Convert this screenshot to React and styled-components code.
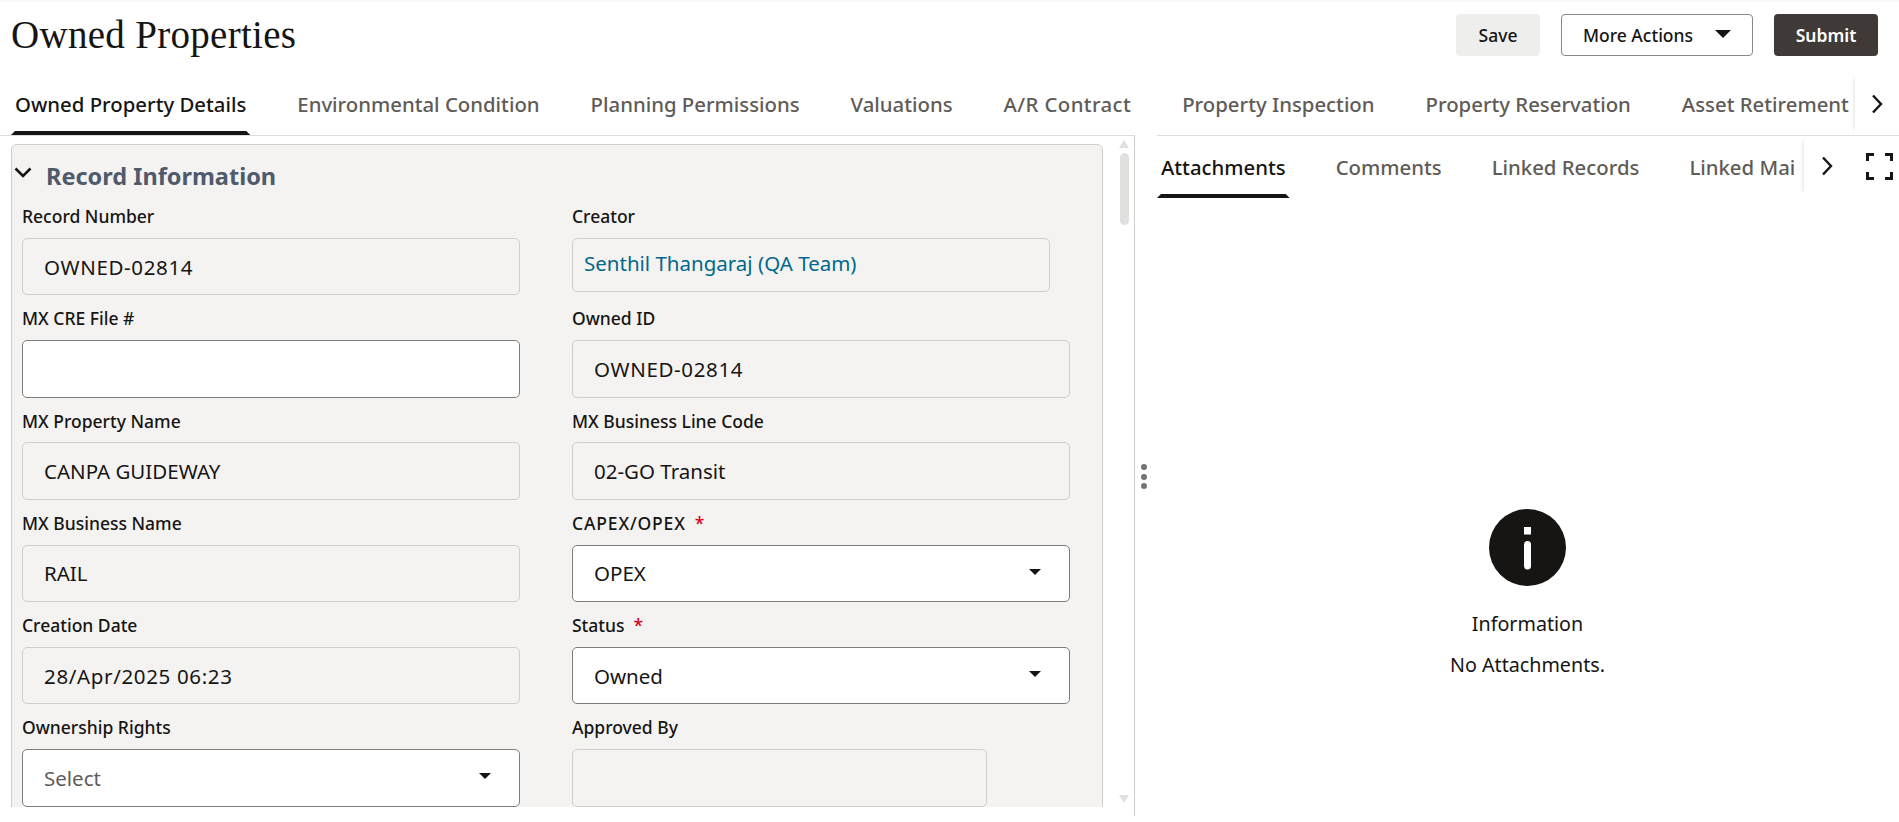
import styled, { createGlobalStyle } from "styled-components";

const GlobalStyle = createGlobalStyle`
  html, body {
    margin: 0;
    padding: 0;
    height: 100%;
    background: #fff;
    overflow: hidden;
  }
  body {
    font-family: "Noto Sans", "Open Sans", sans-serif;
    color: #161513;
  }
  * {
    box-sizing: border-box;
  }
`;

const Page = styled.div`
  width: 1899px;
  height: 822px;
  overflow: hidden;
  background: #fff;
`;

const TopBar = styled.header`
  height: 75px;
  border-top: 2px solid #f8f8f8;
  padding: 12px 21px 0 11px;
  display: flex;
  align-items: flex-start;
  justify-content: space-between;
`;

const Title = styled.h1`
  margin: 0;
  font-family: "Liberation Serif", serif;
  font-size: 39px;
  line-height: 42px;
  letter-spacing: 0.3px;
  font-weight: 400;
  color: #161513;
`;

const Actions = styled.div`
  display: flex;
  gap: 21px;
`;

const Button = styled.button`
  height: 42px;
  width: ${(p) => p.$width}px;
  border-radius: 4px;
  border: 1px solid ${(p) => (p.$variant === "outline" ? "#8a8886" : "transparent")};
  background: ${(p) =>
    p.$variant === "primary" ? "#3f3a37" : p.$variant === "outline" ? "#fff" : "#eeeeed"};
  color: ${(p) => (p.$variant === "primary" ? "#fff" : "#161513")};
  font-family: inherit;
  font-size: 17.5px;
  font-weight: ${(p) => (p.$variant === "primary" ? 600 : 500)};
  padding: 0;
  display: flex;
  align-items: center;
  justify-content: center;
  gap: 22px;
`;

const Caret = styled.span`
  display: block;
  flex: none;
  width: 0;
  height: 0;
  margin-bottom: 3px;
  border-left: ${(p) => p.$size}px solid transparent;
  border-right: ${(p) => p.$size}px solid transparent;
  border-top: ${(p) => p.$size}px solid #161513;
`;

const TabRow = styled.div`
  display: flex;
  height: ${(p) => p.$height}px;
`;

const TabStrip = styled.nav`
  flex: 0 0 ${(p) => p.$width}px;
  min-width: 0;
  display: flex;
  gap: ${(p) => p.$gap}px;
  overflow: hidden;
`;

const Tab = styled.div`
  position: relative;
  flex: none;
  height: 100%;
  padding: 0 4px ${(p) => p.$lift || 0}px;
  display: flex;
  align-items: center;
  font-size: 20.35px;
  font-weight: 500;
  letter-spacing: ${(p) => p.$tracking || 0}px;
  white-space: nowrap;
  color: ${(p) => (p.$active ? "#161513" : "#5f5b57")};

  &::after {
    content: "";
    display: ${(p) => (p.$active ? "block" : "none")};
    position: absolute;
    left: 0;
    right: 0;
    bottom: 0;
    height: 4px;
    background: #161513;
    clip-path: polygon(4px 0, calc(100% - 4px) 0, 100% 100%, 0 100%);
  }
`;

const ScrollTabButton = styled.div`
  flex: none;
  width: ${(p) => p.$width}px;
  height: ${(p) => p.$height}px;
  margin: ${(p) => p.$top || 0}px 0 0 ${(p) => p.$left || 0}px;
  display: flex;
  align-items: center;
  justify-content: center;
  box-shadow: -3px 0 4px -3px rgba(0, 0, 0, 0.18);
  background: #fff;
`;

const MainTabs = styled(TabRow)`
  padding-left: 11px;
`;

const Split = styled.div`
  display: flex;
  height: 681px;
`;

const LeftPane = styled.section`
  flex: 0 0 1135px;
  height: 100%;
  border-top: 1px solid #dedddb;
  border-right: 1px solid #cfcecc;
  display: flex;
  align-items: flex-start;
`;

const FormScroll = styled.div`
  flex: 0 0 1119px;
  height: 671px;
  overflow: hidden;
  padding: 8px 16px 0 11px;
`;

const Panel = styled.div`
  background: #f4f3f1;
  border: 1px solid #cfcecc;
  border-radius: 6px;
  padding: 0 32px 24px 10px;
`;

const SectionHeader = styled.div`
  height: 48px;
  margin-left: -8px;
  padding-top: 14px;
  display: flex;
  align-items: center;
  gap: 14px;
`;

const SectionTitle = styled.h2`
  margin: 0;
  font-size: 23.5px;
  line-height: 30px;
  font-weight: 700;
  color: #4f5a6b;
`;

const FormGrid = styled.div`
  display: grid;
  grid-template-columns: 498px 498px;
  column-gap: 52px;
`;

const Field = styled.div`
  min-width: 0;
  height: 102.25px;
`;

const Label = styled.div`
  height: 24px;
  margin: 11px 0 9.75px;
  font-size: 17.5px;
  line-height: 24px;
  font-weight: 500;
  color: #161513;
  white-space: nowrap;
`;

const WideCaps = styled.span`
  letter-spacing: 0.85px;
`;

const Required = styled.span`
  color: #d6001c;
  margin-left: 9px;
`;

const Input = styled.div`
  width: ${(p) => p.$width || 498}px;
  height: ${(p) => p.$height || 57.5}px;
  border-radius: 5px;
  border: 1px solid ${(p) => (p.$editable ? "#7f7d7b" : "#cfcecc")};
  background: ${(p) => (p.$editable ? "#fff" : "#f4f3f1")};
  padding: ${(p) => (p.$link ? "0 0 4px 11px" : "0 28px 0 21px")};
  display: flex;
  align-items: center;
  justify-content: space-between;
  font-size: 20.5px;
  letter-spacing: ${(p) => (p.$numeric ? 0.65 : 0)}px;
  white-space: nowrap;
  color: ${(p) => (p.$link ? "#00688c" : p.$placeholder ? "#5f5b57" : "#161513")};
`;

const ScrollTrack = styled.div`
  flex: 0 0 10px;
  height: 671px;
  padding-top: 4px;
  display: flex;
  flex-direction: column;
  align-items: center;
`;

const ArrowUp = styled.span`
  width: 0;
  height: 0;
  border-left: 5px solid transparent;
  border-right: 5px solid transparent;
  border-bottom: 8px solid #e0e0df;
`;

const ArrowDown = styled.span`
  width: 0;
  height: 0;
  margin-top: auto;
  margin-bottom: 4px;
  border-left: 5px solid transparent;
  border-right: 5px solid transparent;
  border-top: 8px solid #e0e0df;
`;

const ScrollThumb = styled.div`
  width: 9px;
  height: 72px;
  margin-top: 5px;
  border-radius: 5px;
  background: #e0e0df;
`;

const Splitter = styled.div`
  flex: 0 0 22px;
  height: 100%;
  padding: 329px 4px 0 0;
  display: flex;
  flex-direction: column;
  align-items: center;
  gap: 3.5px;
`;

const Dot = styled.span`
  width: 6px;
  height: 6px;
  border-radius: 50%;
  background: #757371;
`;

const RightPane = styled.section`
  flex: 1;
  min-width: 0;
  height: 100%;
  border-top: 1px solid #dedddb;
`;

const ExpandButton = styled.div`
  flex: 1;
  display: flex;
  align-items: flex-start;
  padding: 17px 0 0 16px;
`;

const EmptyState = styled.div`
  padding: 311px 1px 0 0;
  display: flex;
  flex-direction: column;
  align-items: center;
  font-size: 19.7px;
  line-height: 28px;
  color: #161513;
`;

const EmptyTitle = styled.div`
  margin-top: 24px;
`;

const EmptyText = styled.div`
  margin-top: 13px;
`;

const ChevronRight = () => (
  <svg width="14" height="22" viewBox="0 0 14 22" fill="none">
    <path d="M3 2.5 L11 11 L3 19.5" stroke="#161513" strokeWidth="2.4" />
  </svg>
);

const ChevronDown = () => (
  <svg width="18" height="12" viewBox="0 0 18 12" fill="none" style={{ marginTop: -6 }}>
    <path d="M1.5 1.5 L9 9 L16.5 1.5" stroke="#161513" strokeWidth="2.6" />
  </svg>
);

const FullscreenIcon = () => (
  <svg width="27" height="27" viewBox="0 0 27 27" fill="none">
    <path
      d="M1.5 8 V1.5 H8 M19 1.5 H25.5 V8 M1.5 19 V25.5 H8 M19 25.5 H25.5 V19"
      stroke="#161513"
      strokeWidth="3"
    />
  </svg>
);

const InfoIcon = () => (
  <svg width="77" height="77" viewBox="0 0 77 77">
    <circle cx="38.5" cy="38.5" r="38.5" fill="#161513" />
    <rect x="35" y="18" width="7" height="7.5" fill="#fff" />
    <rect x="35" y="32" width="7" height="28.5" rx="3.5" fill="#fff" />
  </svg>
);

const mainTabs = [
  "Owned Property Details",
  "Environmental Condition",
  "Planning Permissions",
  "Valuations",
  "A/R Contract",
  "Property Inspection",
  "Property Reservation",
  "Asset Retirement Obligation",
];

const sideTabs = ["Attachments", "Comments", "Linked Records", "Linked Mail"];

export default function App() {
  return (
    <Page>
      <GlobalStyle />
      <TopBar>
        <Title>Owned Properties</Title>
        <Actions>
          <Button $width={84}>Save</Button>
          <Button $width={192} $variant="outline">
            More Actions
            <Caret $size={8} />
          </Button>
          <Button $width={104} $variant="primary">
            Submit
          </Button>
        </Actions>
      </TopBar>

      <MainTabs $height={60}>
        <TabStrip $width={1844} $gap={43}>
          {mainTabs.map((tab, i) => (
            <Tab key={tab} $active={i === 0} $lift={2} $tracking={tab === "A/R Contract" ? 0.4 : 0}>
              {tab}
            </Tab>
          ))}
        </TabStrip>
        <ScrollTabButton $width={44} $height={58}>
          <ChevronRight />
        </ScrollTabButton>
      </MainTabs>

      <Split>
        <LeftPane>
          <FormScroll>
            <Panel>
              <SectionHeader>
                <ChevronDown />
                <SectionTitle>Record Information</SectionTitle>
              </SectionHeader>
              <FormGrid>
                <Field>
                  <Label>Record Number</Label>
                  <Input $numeric>OWNED-02814</Input>
                </Field>
                <Field>
                  <Label>Creator</Label>
                  <Input $link $width={477.5} $height={54}>
                    Senthil Thangaraj (QA Team)
                  </Input>
                </Field>
                <Field>
                  <Label>MX CRE File #</Label>
                  <Input $editable />
                </Field>
                <Field>
                  <Label>Owned ID</Label>
                  <Input $numeric>OWNED-02814</Input>
                </Field>
                <Field>
                  <Label>MX Property Name</Label>
                  <Input>CANPA GUIDEWAY</Input>
                </Field>
                <Field>
                  <Label>MX Business Line Code</Label>
                  <Input>02-GO Transit</Input>
                </Field>
                <Field>
                  <Label>MX Business Name</Label>
                  <Input>RAIL</Input>
                </Field>
                <Field>
                  <Label>
                    <WideCaps>CAPEX/OPEX</WideCaps>
                    <Required>*</Required>
                  </Label>
                  <Input $editable>
                    OPEX
                    <Caret $size={6.5} />
                  </Input>
                </Field>
                <Field>
                  <Label>Creation Date</Label>
                  <Input $numeric>28/Apr/2025 06:23</Input>
                </Field>
                <Field>
                  <Label>
                    Status<Required>*</Required>
                  </Label>
                  <Input $editable>
                    Owned
                    <Caret $size={6.5} />
                  </Input>
                </Field>
                <Field>
                  <Label>Ownership Rights</Label>
                  <Input $editable $placeholder>
                    Select
                    <Caret $size={6.5} />
                  </Input>
                </Field>
                <Field>
                  <Label>Approved By</Label>
                  <Input $width={414.5} />
                </Field>
              </FormGrid>
            </Panel>
          </FormScroll>
          <ScrollTrack>
            <ArrowUp />
            <ScrollThumb />
            <ArrowDown />
          </ScrollTrack>
        </LeftPane>

        <Splitter>
          <Dot />
          <Dot />
          <Dot />
        </Splitter>

        <RightPane>
          <TabRow $height={62}>
            <TabStrip $width={639} $gap={42}>
              {sideTabs.map((tab, i) => (
                <Tab key={tab} $active={i === 0}>
                  {tab}
                </Tab>
              ))}
            </TabStrip>
            <ScrollTabButton $width={46} $height={58} $top={1} $left={8}>
              <ChevronRight />
            </ScrollTabButton>
            <ExpandButton>
              <FullscreenIcon />
            </ExpandButton>
          </TabRow>
          <EmptyState>
            <InfoIcon />
            <EmptyTitle>Information</EmptyTitle>
            <EmptyText>No Attachments.</EmptyText>
          </EmptyState>
        </RightPane>
      </Split>
    </Page>
  );
}
